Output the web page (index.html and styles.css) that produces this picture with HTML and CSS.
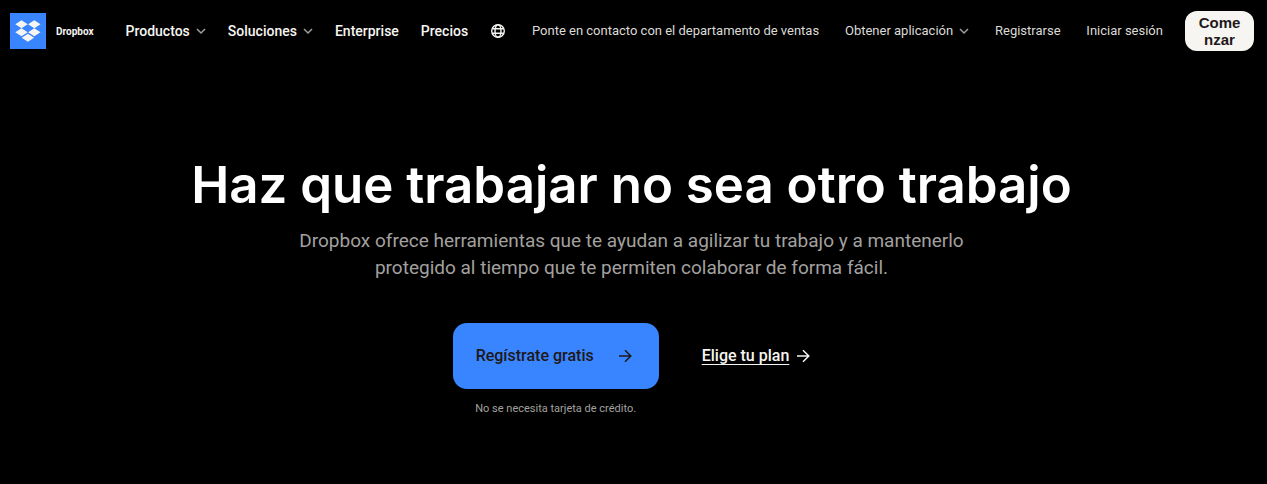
FILE: index.html
```html
<!DOCTYPE html>
<html lang="es">
<head>
  <meta charset="UTF-8">
  <meta name="viewport" content="width=device-width, initial-scale=1.0">
  <title>Dropbox</title>
  <link rel="stylesheet" href="styles.css">
</head>
<body>
  <header class="header">
    <a class="brand" href="#">
      <svg class="brand-logo" viewBox="0 0 36 36" aria-hidden="true">
        <rect width="36" height="36" fill="#3984ff"/>
        <path fill="#f7f5f2" d="M11.500 7.200l6.200 4-6.200 4-6.200-4zM24.300 7.200l6.200 4-6.200 4-6.200-4zM11.500 15.200l6.200 4-6.200 4-6.200-4zM24.300 15.200l6.200 4-6.200 4-6.200-4zM17.900 20.800l6.200 4-6.200 4-6.200-4z"/>
      </svg>
      <span class="brand-name">Dropbox</span>
    </a>
    <nav class="nav nav-main">
      <button class="nav-item" type="button">Productos
        <svg class="chevron" viewBox="0 0 10 10" aria-hidden="true"><path d="M1 3l4 4 4-4"/></svg>
      </button>
      <button class="nav-item" type="button">Soluciones
        <svg class="chevron" viewBox="0 0 10 10" aria-hidden="true"><path d="M1 3l4 4 4-4"/></svg>
      </button>
      <a class="nav-item" href="#">Enterprise</a>
      <a class="nav-item" href="#">Precios</a>
    </nav>
    <nav class="nav nav-side">
      <button class="nav-item" type="button" aria-label="Idioma">
        <svg class="globe" viewBox="0 0 16 16" aria-hidden="true">
          <circle cx="8" cy="8" r="6.300"/>
          <ellipse cx="8" cy="8" rx="3" ry="6.300"/>
          <path d="M2.300 5.800h11.400M2.300 10.200h11.400"/>
        </svg>
      </button>
      <a class="nav-item" href="#">Ponte en contacto con el departamento de ventas</a>
      <button class="nav-item" type="button">Obtener aplicación
        <svg class="chevron" viewBox="0 0 10 10" aria-hidden="true"><path d="M1 3l4 4 4-4"/></svg>
      </button>
      <a class="nav-item" href="#">Registrarse</a>
      <a class="nav-item" href="#">Iniciar sesión</a>
    </nav>
    <button class="start-btn" type="button">Come<wbr>nzar</button>
  </header>
  <main class="hero">
    <h1 class="hero-title">Haz que trabajar no sea otro trabajo</h1>
    <p class="hero-text">Dropbox ofrece herramientas que te ayudan a agilizar tu trabajo y a mantenerlo protegido al tiempo que te permiten colaborar de forma fácil.</p>
    <div class="actions">
      <div class="signup">
        <button class="signup-btn" type="button">
          <span>Regístrate gratis</span>
          <svg class="arrow" viewBox="0 0 14 14" aria-hidden="true"><path d="M1 7h11.500M7 1.200L12.800 7 7 12.800"/></svg>
        </button>
        <p class="signup-note">No se necesita tarjeta de crédito.</p>
      </div>
      <a class="plan-link" href="#">
        <span class="plan-label">Elige tu plan</span>
        <svg class="arrow" viewBox="0 0 14 14" aria-hidden="true"><path d="M1 7h11.500M7 1.200L12.800 7 7 12.800"/></svg>
      </a>
    </div>
  </main>
</body>
</html>
```
FILE: styles.css
```css
* {
  box-sizing: border-box;
}
body {
  margin: 0;
  background-color: #000;
  color: #f7f5f2;
  font-family: Roboto, Arial, sans-serif;
}
a {
  color: inherit;
  text-decoration: none;
}
button {
  font-family: inherit;
  cursor: pointer;
  border: none;
}
.header {
  display: flex;
  align-items: center;
  padding: 11px 13px 0 10px;
}
.brand {
  display: flex;
  align-items: center;
  gap: 10px;
  margin-right: 32px;
}
.brand-logo {
  width: 36px;
  height: 36px;
}
.brand-name {
  font-size: 10px;
  font-weight: 700;
}
.nav {
  display: flex;
  align-items: center;
  gap: 22px;
}
.nav-main {
  font-weight: 500;
}
.nav-side {
  flex: 1;
  justify-content: space-between;
  margin: 0 22px;
}
.nav-item {
  display: flex;
  align-items: center;
  gap: 6px;
  padding: 0;
  background: none;
  color: #f7f5f2;
  font: inherit;
  font-size: 14px;
  line-height: 20px;
  white-space: nowrap;
}
.nav-side .nav-item {
  color: #dcdad7;
  font-size: 13px;
}
.chevron {
  width: 10px;
  height: 10px;
  fill: none;
  stroke: #a09e9b;
  stroke-width: 1.5;
}
.globe {
  width: 16px;
  height: 16px;
  fill: none;
  stroke: #f7f5f2;
  stroke-width: 1.4;
}
.start-btn {
  width: 69px;
  padding: 3px 12px;
  border-radius: 12px;
  background-color: #f7f5f2;
  color: #1e1919;
  font-family: "Liberation Sans", Arial, sans-serif;
  font-size: 15px;
  font-weight: 700;
  line-height: 17px;
}
.hero {
  display: flex;
  flex-direction: column;
  align-items: center;
  padding: 104px 28px 60px 24px;
  text-align: center;
}
.hero-title {
  margin: 0;
  color: #fff;
  font-family: Inter, Arial, sans-serif;
  font-size: 51px;
  font-weight: 600;
  line-height: 60px;
}
.hero-text {
  max-width: 700px;
  margin: 12px 0 0;
  color: #a3a19f;
  font-size: 19px;
  line-height: 27px;
}
.actions {
  display: flex;
  align-items: flex-start;
  gap: 43px;
  margin-top: 42px;
}
.signup-btn {
  display: flex;
  align-items: center;
  gap: 24px;
  padding: 23px 27px 23px 23px;
  border-radius: 14px;
  background-color: #3984ff;
  color: #1e1919;
  font-size: 16px;
  font-weight: 500;
  line-height: 20px;
}
.signup-note {
  margin: 12px 0 0;
  color: #a3a19f;
  font-size: 11px;
  line-height: 16px;
}
.plan-link {
  display: flex;
  align-items: center;
  gap: 7px;
  padding: 23px 0;
  font-size: 16px;
  font-weight: 500;
  line-height: 20px;
}
.plan-label {
  text-decoration: underline;
  text-decoration-thickness: 1px;
  text-underline-offset: 3px;
}
.arrow {
  width: 14px;
  height: 14px;
  fill: none;
  stroke: currentColor;
  stroke-width: 1.5;
}
```
